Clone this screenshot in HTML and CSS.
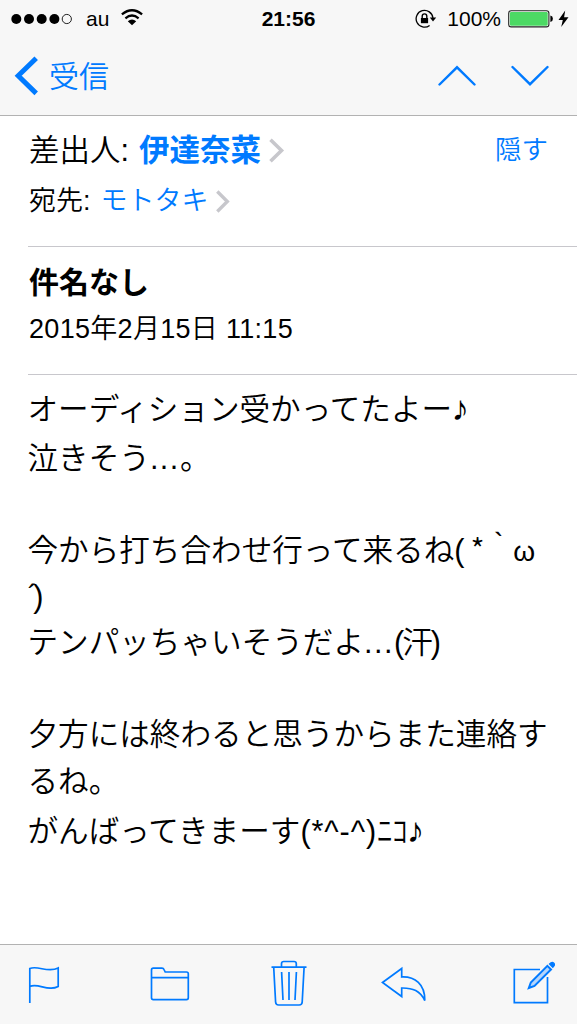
FILE: index.html
```html
<!DOCTYPE html>
<html lang="ja">
<head>
    <meta charset="UTF-8">
    <meta name="viewport" content="width=device-width, initial-scale=1.0">
    <title>受信</title>
    <link rel="stylesheet" href="styles.css">
</head>
<body>

    <header class="header">
        <!-- ステータスバー -->
        <div class="status">
            <div class="status-left">
                <svg class="signal" width="62" height="12" viewBox="0 0 62 12">
                    <circle cx="5.3" cy="6" r="5"/>
                    <circle cx="18" cy="6" r="5"/>
                    <circle cx="30.7" cy="6" r="5"/>
                    <circle cx="43.4" cy="6" r="5"/>
                    <circle cx="55.8" cy="6" r="4.6" fill="none" stroke="#222" stroke-width="1"/>
                </svg>
                <span class="carrier">au</span>
                <svg class="wifi" width="22" height="17" viewBox="0 0 22 17">
                    <path d="M0.9 5.4Q11 -2.8 21.1 5.4M4.4 9.3Q11 3.8 17.6 9.3" fill="none" stroke="#000" stroke-width="2.3"/>
                    <path d="M6.8 12.2Q11 9 15.2 12.2L11 16.2Z"/>
                </svg>
            </div>
            <div class="clock">21:56</div>
            <div class="status-right">
                <svg class="lock" width="22" height="20" viewBox="0 0 22 20">
                    <path d="M14.6 16.5A8.4 8.4 0 1 1 17.9 9" fill="none" stroke="#000" stroke-width="1.3"/>
                    <path d="M14.8 8.6H21.2L18 12.4Z"/>
                    <path d="M5.9 9H13.1V14.2H5.9Z"/>
                    <path d="M7.2 9V7.2A2.3 2.3 0 0 1 11.8 7.2V9" fill="none" stroke="#000" stroke-width="1.4"/>
                </svg>
                <span class="percent">100%</span>
                <svg class="battery" width="46" height="18" viewBox="0 0 46 18">
                    <rect x="0.7" y="0.7" width="40.2" height="16.2" rx="2.5" fill="#fff" stroke="#222" stroke-width="1.1"/>
                    <rect x="1.9" y="1.9" width="37.8" height="13.8" rx="1.3" fill="#4cd964"/>
                    <path d="M42.4 5.5Q44.9 6 44.9 8.8Q44.9 11.6 42.4 12.1Z"/>
                </svg>
                <svg class="bolt" width="11" height="18" viewBox="0 0 11 18">
                    <path d="M7.2 0.5L0.5 10H4.8L3.2 17L10.5 7.2H6.1Z"/>
                </svg>
            </div>
        </div>

        <!-- ナビゲーションバー -->
        <nav class="nav">
            <a href="#" class="back">
                <svg width="24" height="40" viewBox="0 0 24 40">
                    <path d="M22.2 2.2L4.2 19.8L22.2 37.4" fill="none" stroke="#007aff" stroke-width="5"/>
                </svg>
                <span>受信</span>
            </a>
            <div class="arrows">
                <svg width="38" height="22" viewBox="0 0 38 22">
                    <path d="M1.5 19.5L19 2.3L36.5 19.5" fill="none" stroke="#007aff" stroke-width="2.4" stroke-linecap="round"/>
                </svg>
                <svg width="38" height="22" viewBox="0 0 38 22">
                    <path d="M1.5 2L19 19.2L36.5 2" fill="none" stroke="#007aff" stroke-width="2.4" stroke-linecap="round"/>
                </svg>
            </div>
        </nav>
    </header>

    <main class="mail">
        <section class="address">
            <div class="from">
                <span>差出人:</span>
                <a href="#" class="name">伊達奈菜</a>
                <svg width="16" height="25" viewBox="0 0 16 25">
                    <path d="M1.5 1.8L12.5 12.5L1.5 23.2" fill="none" stroke="#c7c7cc" stroke-width="3.6"/>
                </svg>
                <a href="#" class="hide">隠す</a>
            </div>
            <div class="to">
                <span>宛先:</span>
                <a href="#" class="name">モトタキ</a>
                <svg width="14" height="23" viewBox="0 0 14 23">
                    <path d="M1.3 1.5L11.3 11.5L1.3 21.5" fill="none" stroke="#c7c7cc" stroke-width="3.4"/>
                </svg>
            </div>
        </section>

        <section class="subject">
            <h1>件名なし</h1>
            <p class="date">2015年2月15日 11:15</p>
        </section>

        <article class="body">
            <p class="tall">オーディション受かってたよー<span class="note">♪</span></p>
            <p class="second">泣きそう<span class="dots">...</span>。</p>
            <p class="blank"></p>
            <p class="face">今から打ち合わせ行って来るね<span>(</span><span class="star">*</span><span class="grave">｀</span><span class="omega">ω</span></p>
            <p class="short"><span class="acute">´)</span></p>
            <p>テンパッちゃいそうだよ<span class="dots">...</span><span class="sweat">(汗)</span></p>
            <p></p>
            <p>夕方には終わると思うからまた連絡す</p>
            <p class="tall">るね。</p>
            <p class="last">がんばってきまーす<span class="kaomoji">(*^-^)</span>ﾆｺ<span class="note">♪</span></p>
        </article>
    </main>

    <!-- ツールバー -->
    <footer class="toolbar">
        <svg class="flag" width="32" height="38" viewBox="0 0 32 38">
            <path d="M1.8 37V2.5C10 -1 20 7.5 30.2 2V20.5C20 26 10 16.5 1.8 20.5"/>
        </svg>
        <svg class="folder" width="40" height="34" viewBox="0 0 40 34">
            <path d="M1.5 10.5V3Q1.5 1.2 3.3 1.2H12Q13.5 1.2 14 2.5L15.2 5H36.5Q38.3 5 38.3 6.8V30.8Q38.3 32.6 36.5 32.6H3.3Q1.5 32.6 1.5 30.8V10.7H38.3"/>
        </svg>
        <svg class="trash" width="36" height="47" viewBox="0 0 36 47">
            <path d="M0.5 7.2H35.5M10.5 7V3.8Q10.5 1.5 12.8 1.5H23Q25.3 1.5 25.3 3.8V7M2.7 7.2L4.6 42Q4.8 45 7.6 45H28.2Q31 45 31.2 42L33.1 7.2M10.6 12L12 40M18 12V40M25.4 12L24 40"/>
        </svg>
        <svg class="reply" width="46" height="37" viewBox="0 0 46 37">
            <path d="M1.5 16.5L20.7 2.5V11C34 10.5 44 18 43.8 34.5C39 25 32 21.8 20.7 22V30.5Z"/>
        </svg>
        <svg class="compose" width="42" height="43" viewBox="0 0 42 43">
            <path d="M27 8.5H1.3V41.7H34.5V16"/>
            <path d="M17.8 21.5L15.8 27L21.5 25L38 8.5L34.4 4.9Z" class="pencil"/>
            <path d="M36.5 3L38 1.8Q39.5 0.8 40.9 2.2Q42 3.5 41 5L39.8 6.3Z" class="eraser"/>
        </svg>
    </footer>

</body>
</html>
```

FILE: styles.css
```css
body {
    margin: 0;
    height: 1024px;
    display: flex;
    flex-direction: column;
    overflow: hidden;
    background-color: #fff;
    color: #000;
    font-family: "Liberation Sans", "Noto Sans CJK JP", sans-serif;
    font-weight: 350;
}
svg {
    display: block;
    flex: none;
}
a {
    color: #007aff;
    text-decoration: none;
}
p, h1 {
    margin: 0;
}

/* ヘッダー */
.header {
    box-sizing: border-box;
    height: 116px;
    background-color: #f7f7f7;
    border-bottom: 1px solid #b2b2b2;
}
.status {
    display: grid;
    grid-template-columns: 1fr 60px 1fr;
    align-items: center;
    height: 37px;
    font-size: 21px;
}
.status-left, .status-right {
    display: flex;
    align-items: center;
}
.status-left {
    padding-left: 11px;
}
.status-right {
    justify-content: flex-end;
    padding-right: 8px;
}
.carrier {
    margin-left: 13px;
}
.wifi {
    margin-left: 12px;
    margin-top: -2px;
}
.clock {
    font-weight: bold;
    font-size: 21px;
    text-align: center;
}
.percent {
    margin: 0 7px 0 10px;
}
.bolt {
    margin-left: 4px;
}
.nav {
    display: flex;
    justify-content: space-between;
    align-items: center;
    height: 78px;
    padding: 0 28px 0 14px;
}
.back {
    display: flex;
    align-items: center;
    gap: 11px;
    font-size: 30px;
}
.back span {
    padding-bottom: 5px;
}
.arrows {
    display: flex;
    gap: 35px;
}

/* 差出人・宛先 */
.address {
    box-sizing: border-box;
    height: 131px;
    margin-left: 28px;
    padding-top: 8px;
    border-bottom: 1px solid #c8c7cc;
}
.from, .to {
    display: flex;
    align-items: center;
    padding-left: 1px;
}
.from span, .to span, .from a, .to a {
    padding-bottom: 5px;
}
.from {
    height: 52px;
    font-size: 30.5px;
}
.from .name {
    font-weight: bold;
    margin: 0 8px 0 10px;
}
.from .hide {
    margin-left: auto;
    margin-right: 29px;
    font-size: 26.5px;
}
.to {
    height: 50px;
    font-size: 27px;
}
.to .name {
    margin: 0 7px 0 10px;
}

/* 件名 */
.subject {
    box-sizing: border-box;
    height: 128px;
    margin-left: 28px;
    padding: 12px 0 0 1px;
    border-bottom: 1px solid #c8c7cc;
}
.subject h1 {
    font-size: 30px;
    line-height: 48px;
}
.date {
    font-size: 27px;
    line-height: 44px;
    letter-spacing: 0.3px;
}

/* 本文 */
.mail {
    flex: 1;
}
.body {
    padding: 10px 0 0 27.5px;
    font-size: 30.6px;
    line-height: 46px;
    white-space: nowrap;
}
.body p {
    height: 46px;
}
.body .tall {
    height: 49px;
    line-height: 49px;
}
.body .second {
    height: 48px;
    line-height: 48px;
}
.body .blank {
    height: 45px;
}
.body .face {
    height: 47px;
    line-height: 47px;
}
.body .short {
    height: 45px;
    line-height: 45px;
}
.body .last {
    height: 50px;
    line-height: 50px;
}
.note {
    font-size: 35px;
    line-height: 1;
    margin-left: -1px;
}
.dots {
    letter-spacing: 1.5px;
}
.sweat {
    letter-spacing: -2px;
}
.star {
    margin-left: 6px;
    font-family: "Noto Sans CJK JP", sans-serif;
    line-height: 1;
}
.omega {
    font-size: 28px;
    margin-left: -2px;
}
.acute {
    letter-spacing: -4.5px;
}
.kaomoji {
    letter-spacing: 0.9px;
}

/* ツールバー */
.toolbar {
    box-sizing: border-box;
    height: 80px;
    display: flex;
    align-items: center;
    padding-left: 28px;
    background-color: #f7f7f7;
    border-top: 1px solid #b2b2b2;
}
.toolbar path {
    fill: none;
    stroke: #007aff;
    stroke-width: 1.7;
}
.folder {
    margin-left: 90px;
    margin-bottom: 2px;
}
.trash {
    margin-left: 81px;
    margin-bottom: 2px;
}
.reply {
    margin-left: 74px;
}
.compose {
    margin-left: 86px;
    margin-bottom: 5px;
}
.toolbar .pencil {
    fill: #b5d5fb;
    stroke-width: 2;
}
.toolbar .eraser {
    fill: #007aff;
    stroke-width: 1.2;
}
```
